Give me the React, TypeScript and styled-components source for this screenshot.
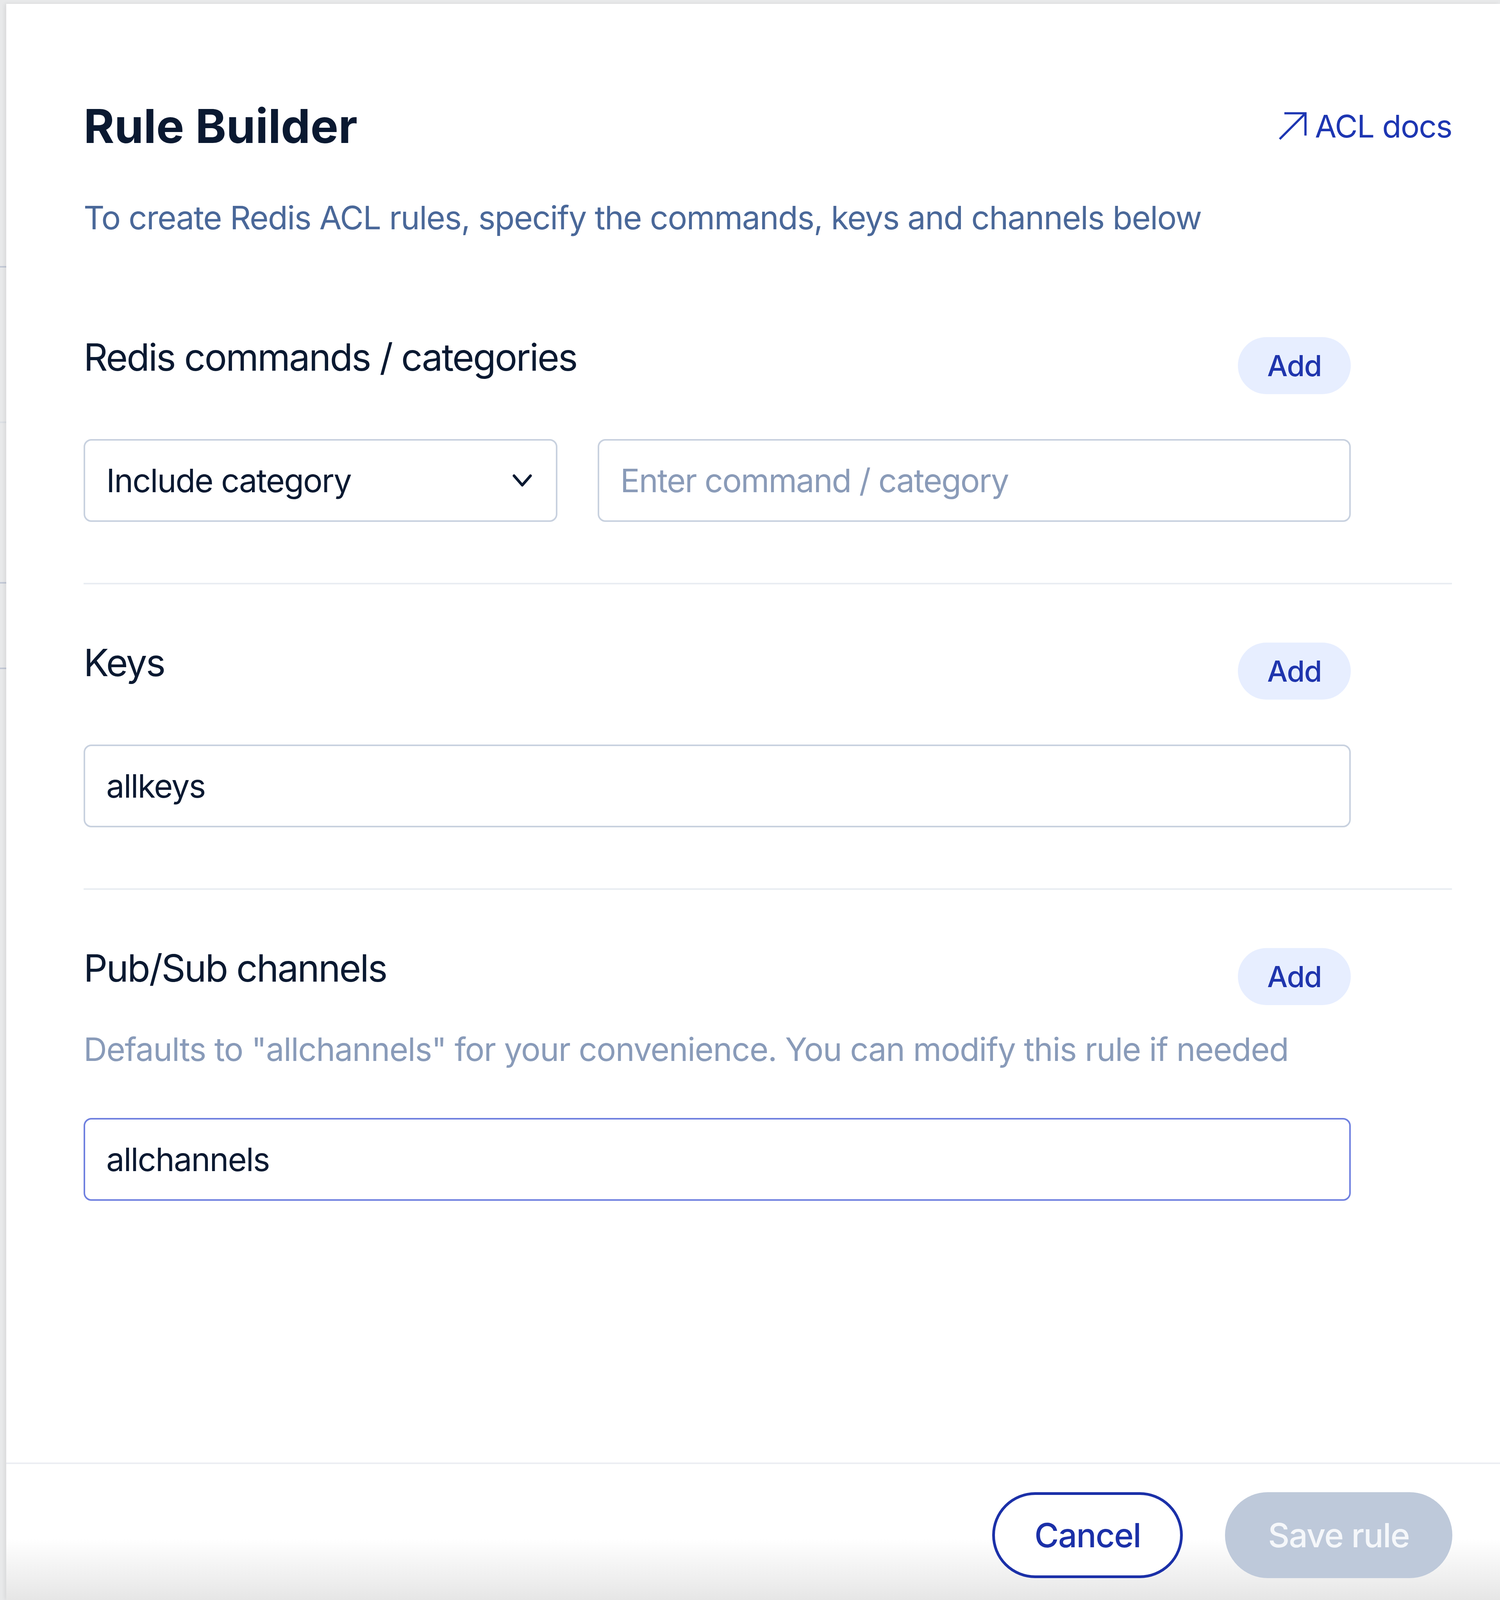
import React from 'react';
import styled, { createGlobalStyle } from 'styled-components';

// estilos globais
const GlobalStyle = createGlobalStyle`
  html, body {
    margin: 0;
    padding: 0;
  }
  body {
    background: #e8e9ea;
    font-family: Inter, "Noto Sans", sans-serif;
    -webkit-font-smoothing: antialiased;
  }
`;

const Page = styled.div`
  display: flex;
  min-height: 100vh;
  padding-top: 10px;
  box-sizing: border-box;
`;

// faixa da página que fica por trás do modal
const Backdrop = styled.div`
  width: 16px;
  flex: none;
  display: flex;
  flex-direction: column;
`;
const BackdropRow = styled.div<{ $h: number; $faint?: boolean }>`
  height: ${(p) => p.$h}px;
  flex: none;
  box-sizing: border-box;
  border-bottom: 4px solid ${(p) => (p.$faint ? '#dcdfe4' : '#c3c9d6')};
`;

const Panel = styled.div`
  flex: 1;
  display: flex;
  flex-direction: column;
  background: #ffffff;
  box-shadow: -4px 0 10px rgba(0, 0, 0, 0.07);
`;

const Body = styled.div`
  padding: 241px 123px 0 198px;
`;

const Header = styled.div`
  display: flex;
  justify-content: space-between;
  align-items: center;
`;

const Title = styled.h1`
  margin: 0;
  font-size: 120px;
  line-height: 144px;
  font-weight: 700;
  color: #0a1931;
`;

const DocsLink = styled.a`
  display: inline-flex;
  align-items: center;
  gap: 21px;
  font-size: 80px;
  line-height: 96px;
  color: #1d36b2;
  text-decoration: none;
  letter-spacing: -0.02em;
`;

const Subtitle = styled.p`
  margin: 112px 0 107px;
  font-size: 83px;
  line-height: 100px;
  color: #4a6899;
  letter-spacing: -0.02em;
`;

const Section = styled.section<{ $last?: boolean }>`
  padding: 143px 0 ${(p) => (p.$last ? 0 : 156)}px;
  border-bottom: ${(p) => (p.$last ? 'none' : '4px solid #e9edf2')};
`;

const Inner = styled.div`
  max-width: 3244px;
`;

const HeadingRow = styled.div`
  display: flex;
  justify-content: space-between;
  align-items: flex-start;
`;

const Heading = styled.h2`
  margin: 0;
  font-size: 96px;
  line-height: 115px;
  font-weight: 400;
  color: #0a1931;
  letter-spacing: -0.032em;
`;

const AddButton = styled.button`
  margin-top: 6px;
  height: 146px;
  padding: 0 75px;
  border: none;
  border-radius: 73px;
  background: #e7eeff;
  color: #1f35ad;
  font-family: inherit;
  font-size: 74px;
  font-weight: 500;
  letter-spacing: -0.02em;
`;

const Helper = styled.p`
  margin: 63px 0 0;
  font-size: 83px;
  line-height: 100px;
  color: #899bb9;
  letter-spacing: -0.018em;
`;

const FieldRow = styled.div<{ $split?: boolean; $gap?: number }>`
  display: grid;
  grid-template-columns: ${(p) => (p.$split ? '1213px 1fr' : '1fr')};
  gap: 103px;
  margin-top: ${(p) => p.$gap ?? 115}px;
`;

const SelectBox = styled.div`
  display: flex;
  align-items: center;
  justify-content: space-between;
  height: 212px;
  box-sizing: border-box;
  padding: 0 61px 0 54px;
  border: 4px solid #c8d1df;
  border-radius: 20px;
  font-size: 83px;
  color: #0a1931;
  letter-spacing: -0.025em;
`;

const TextInput = styled.input<{ $focused?: boolean }>`
  width: 100%;
  height: 212px;
  box-sizing: border-box;
  padding: 0 54px;
  border: 4px solid ${(p) => (p.$focused ? '#6f80df' : '#c8d1df')};
  border-radius: 20px;
  outline: none;
  background: #ffffff;
  font-family: inherit;
  font-size: 83px;
  color: #0a1931;
  letter-spacing: -0.025em;

  &::placeholder {
    color: #8a9bb8;
  }
`;

const Footer = styled.footer`
  margin-top: auto;
  display: flex;
  justify-content: flex-end;
  gap: 108px;
  padding: 72px 122px 56px;
  border-top: 4px solid #eceef3;
  background: linear-gradient(to bottom, #ffffff 0%, #ffffff 55%, #e6e6e6 100%);
`;

const PillButton = styled.button<{ $primary?: boolean }>`
  height: 220px;
  padding: 0 ${(p) => (p.$primary ? 110 : 101)}px;
  border-radius: 110px;
  border: ${(p) => (p.$primary ? 'none' : '7px solid #1b30a8')};
  background: ${(p) => (p.$primary ? '#bec9da' : '#ffffff')};
  color: ${(p) => (p.$primary ? '#f5f7fa' : '#1b30a8')};
  font-family: inherit;
  font-size: 85px;
  font-weight: 500;
  letter-spacing: -0.02em;
`;

const ArrowIcon = () => (
  <svg width="72" height="72" viewBox="0 0 24 24" fill="none" stroke="currentColor" strokeWidth="1.9">
    <path d="M1 23 23 1" />
    <path d="M5 1h18v19" />
  </svg>
);

const Chevron = () => (
  <svg width="50" height="35" viewBox="0 0 50 35" fill="none" stroke="#0a1931" strokeWidth="7" strokeLinecap="round" strokeLinejoin="round">
    <polyline points="4,5 25,29 46,5" />
  </svg>
);

const App: React.FC = () => {
  return (
    <>
      <GlobalStyle />
      <Page>
        <Backdrop>
          <BackdropRow $h={675} />
          <BackdropRow $h={398} $faint />
          <BackdropRow $h={411} />
          <BackdropRow $h={219} />
        </Backdrop>
        <Panel>
          <Body>
            <Header>
              <Title>Rule Builder</Title>
              <DocsLink href="#">
                <ArrowIcon />
                ACL docs
              </DocsLink>
            </Header>
            <Subtitle>To create Redis ACL rules, specify the commands, keys and channels below</Subtitle>

            <Section>
              <Inner>
                <HeadingRow>
                  <Heading>Redis commands / categories</Heading>
                  <AddButton>Add</AddButton>
                </HeadingRow>
                <FieldRow $split>
                  <SelectBox>
                    Include category
                    <Chevron />
                  </SelectBox>
                  <TextInput placeholder="Enter command / category" />
                </FieldRow>
              </Inner>
            </Section>

            <Section>
              <Inner>
                <HeadingRow>
                  <Heading>Keys</Heading>
                  <AddButton>Add</AddButton>
                </HeadingRow>
                <FieldRow>
                  <TextInput defaultValue="allkeys" />
                </FieldRow>
              </Inner>
            </Section>

            <Section $last>
              <Inner>
                <HeadingRow>
                  <Heading>Pub/Sub channels</Heading>
                  <AddButton>Add</AddButton>
                </HeadingRow>
                <Helper>Defaults to "allchannels" for your convenience. You can modify this rule if needed</Helper>
                <FieldRow $gap={126}>
                  <TextInput $focused defaultValue="allchannels" />
                </FieldRow>
              </Inner>
            </Section>
          </Body>
          <Footer>
            <PillButton>Cancel</PillButton>
            <PillButton $primary>Save rule</PillButton>
          </Footer>
        </Panel>
      </Page>
    </>
  );
};

export default App;
